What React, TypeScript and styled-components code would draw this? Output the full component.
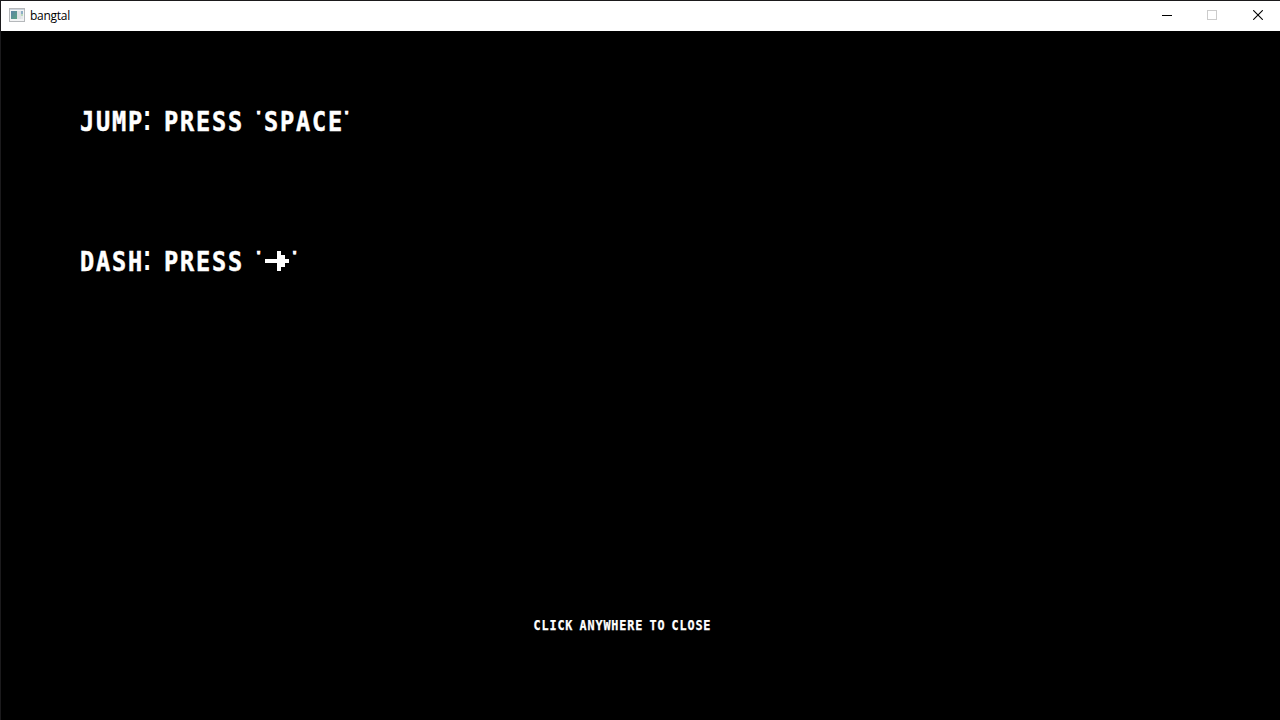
import React from 'react';
import styled, { createGlobalStyle } from 'styled-components';

const GlobalStyle = createGlobalStyle`
  *, *::before, *::after { box-sizing: border-box; }
  body { margin: 0; background: #000; overflow: hidden; }
`;

const Window = styled.div`
  display: flex;
  flex-direction: column;
  width: 1280px;
  height: 720px;
  border-top: 1px solid #1b1a1c;
  border-left: 1px solid #1b1a1c;
  background: #000;
`;

const TitleBar = styled.header`
  display: flex;
  align-items: center;
  height: 30px;
  flex: none;
  padding-left: 8px;
  background: #fff;
`;

const AppIconSvg = styled.svg`
  display: block;
  margin-top: -2px;
`;

const Title = styled.span`
  flex: 1;
  padding-left: 5px;
  font: 12px/16px 'Open Sans', 'Noto Sans', sans-serif;
  letter-spacing: -0.28px;
  color: #000;
`;

const Caption = styled.button<{ $width: number }>`
  display: flex;
  align-items: center;
  justify-content: center;
  width: ${(p) => p.$width}px;
  height: 28px;
  padding: 0;
  border: 0;
  background: none;
`;

const Controls = styled.div`
  display: flex;
  align-self: flex-start;
  margin-right: -1px;
`;

const Scene = styled.main`
  display: flex;
  flex-direction: column;
  flex: 1;
  padding: 80px 0 0 80px;
`;

const Line = styled.p<{ $gap: number }>`
  display: flex;
  height: 20px;
  margin: 0 0 ${(p) => p.$gap}px;
  font: bold 27.4px/20px 'DejaVu Sans Mono', monospace;
  color: #fff;
  white-space: pre;
`;

const Prompt = styled(Line)`
  height: 10px;
  margin-left: 453px;
  font-size: 13.7px;
  line-height: 10px;
`;

const Cell = styled.span<{ $width: number }>`
  display: block;
  flex: none;
  width: ${(p) => p.$width}px;
`;

const Letters = styled.span<{ $small?: boolean }>`
  display: inline-block;
  transform-origin: 0 50%;
  transform: translate(${(p) => (p.$small ? '-0.6px, 0' : '-1.1px, 0.6px')}) scaleX(0.86);
  letter-spacing: ${(p) => (p.$small ? 1.054 : 2.108)}px;
  -webkit-text-stroke: ${(p) => (p.$small ? 0.25 : 0.5)}px #fff;
`;

const Mark = styled.span`
  display: block;
  width: 9px;
  font: bold 28px/20px 'Liberation Sans', sans-serif;
  transform-origin: 0 100%;
  transform: translate(-2px, 0.5px) scale(0.88, 1.33);
`;

const Quote = styled.span`
  display: block;
  width: 4px;
  font: bold 12px/10px 'Liberation Sans', sans-serif;
  -webkit-text-stroke: 0.7px #fff;
  transform-origin: 0 50%;
  transform: translateX(-0.4px) scaleX(1.45);
`;

const Word = ({ children, small }: { children: string; small?: boolean }) => (
  <Cell $width={children.length * (small ? 8 : 16)}>
    <Letters $small={small}>{children}</Letters>
  </Cell>
);

const Space = ({ small }: { small?: boolean }) => <Cell $width={small ? 6 : 12}> </Cell>;
const Colon = () => <Cell $width={8}><Mark>:</Mark></Cell>;
const Apostrophe = () => <Cell $width={8}><Quote>'</Quote></Cell>;

const AppIcon = () => (
  <AppIconSvg width="16" height="14" viewBox="0 0 16 14" shapeRendering="crispEdges">
    <defs>
      <linearGradient id="pane" x1="0" y1="0" x2="1" y2="1">
        <stop offset="0" stopColor="#5b83a6" />
        <stop offset="1" stopColor="#5ca383" />
      </linearGradient>
    </defs>
    <rect width="16" height="14" fill="#b5b8bb" />
    <rect x="1" y="1" width="14" height="1" fill="#cbd3dc" />
    <rect x="1" y="2" width="14" height="11" fill="#f3f4f5" />
    <rect x="2" y="3" width="6" height="8" fill="url(#pane)" />
    <rect x="8" y="3" width="4" height="8" fill="#dfe2e5" />
    <rect x="12" y="3" width="2" height="3" fill="#8eafc6" />
    <rect x="12" y="6" width="2" height="2" fill="#b9d8bd" />
    <rect x="12" y="8" width="2" height="3" fill="#e5e8ea" />
  </AppIconSvg>
);

const Arrow = () => (
  <svg width="24" height="20" viewBox="0 0 24 20" shapeRendering="crispEdges" fill="#fff">
    <path d="M0 8H12V0H16V4H20V8H24V12H20V16H16V20H12V12H0Z" />
  </svg>
);

export default function App() {
  return (
    <>
      <GlobalStyle />
      <Window>
        <TitleBar>
          <AppIcon />
          <Title>bangtal</Title>
          <Controls>
            <Caption $width={44} aria-label="Minimize">
              <svg width="10" height="10" shapeRendering="crispEdges"><path d="M0 5.5H10" stroke="#000" /></svg>
            </Caption>
            <Caption $width={46} aria-label="Maximize">
              <svg width="10" height="10" shapeRendering="crispEdges"><path d="M.5.5H9.5V9.5H.5Z" fill="none" stroke="#ccc" /></svg>
            </Caption>
            <Caption $width={46} aria-label="Close">
              <svg width="10" height="10"><path d="M.2.2L9.8 9.8M9.8.2L.2 9.8" stroke="#000" strokeWidth="1.1" /></svg>
            </Caption>
          </Controls>
        </TitleBar>
        <Scene>
          <Line $gap={120}>
            <Word>JUMP</Word><Colon /><Space /><Word>PRESS</Word><Space />
            <Apostrophe /><Word>SPACE</Word><Apostrophe />
          </Line>
          <Line $gap={349}>
            <Word>DASH</Word><Colon /><Space /><Word>PRESS</Word><Space />
            <Apostrophe /><Cell $width={28}><Arrow /></Cell><Apostrophe />
          </Line>
          <Prompt $gap={0}>
            <Word small>CLICK</Word><Space small /><Word small>ANYWHERE</Word><Space small />
            <Word small>TO</Word><Space small /><Word small>CLOSE</Word>
          </Prompt>
        </Scene>
      </Window>
    </>
  );
}
